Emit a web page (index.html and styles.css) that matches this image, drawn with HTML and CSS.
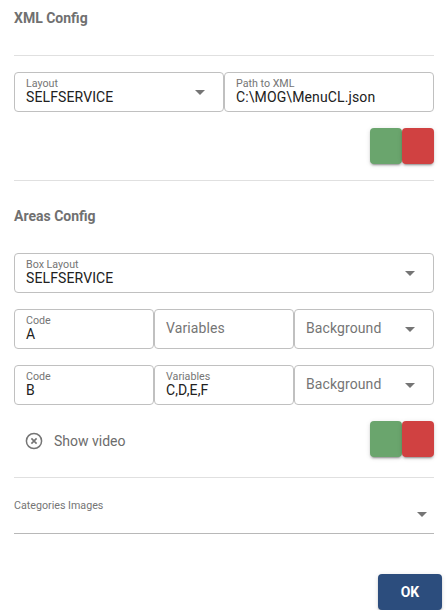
FILE: index.html
```html
<!DOCTYPE html>
<html lang="en">
<head>
<meta charset="utf-8">
<title>XML Config</title>
<link rel="stylesheet" href="styles.css">
</head>
<body>
<main class="dialog">
  <h2 class="title">XML Config</h2>
  <hr class="rule rule-first">
  <div class="row">
    <div class="field"><div class="text"><label>Layout</label><span class="value">SELFSERVICE</span></div><i class="arrow"></i></div>
    <div class="field"><div class="text"><label>Path to XML</label><span class="value">C:\MOG\MenuCL.json</span></div></div>
  </div>
  <div class="actions"><button class="btn green"></button><button class="btn red"></button></div>
  <hr class="rule rule-second">
  <h2 class="title">Areas Config</h2>
  <div class="row row-box">
    <div class="field"><div class="text"><label>Box Layout</label><span class="value">SELFSERVICE</span></div><i class="arrow"></i></div>
  </div>
  <div class="row">
    <div class="field"><div class="text"><label>Code</label><span class="value">A</span></div></div>
    <div class="field"><span class="placeholder">Variables</span></div>
    <div class="field"><span class="placeholder">Background</span><i class="arrow"></i></div>
  </div>
  <div class="row">
    <div class="field"><div class="text"><label>Code</label><span class="value">B</span></div></div>
    <div class="field"><div class="text"><label>Variables</label><span class="value">C,D,E,F</span></div></div>
    <div class="field"><span class="placeholder">Background</span><i class="arrow"></i></div>
  </div>
  <div class="actions">
    <div class="video">
      <svg width="20" height="20" viewBox="0 0 20 20" fill="none" stroke="#757575"><circle cx="10" cy="10" r="7.6" stroke-width="1.5"/><path d="M7.4 7.4l5.2 5.2M12.6 7.4l-5.2 5.2" stroke-width="1.6"/></svg>
      <span>Show video</span>
    </div>
    <button class="btn green"></button><button class="btn red"></button>
  </div>
  <hr class="rule rule-third">
  <div class="categories"><label>Categories Images</label><i class="arrow"></i></div>
  <div class="footer"><button class="ok">OK</button></div>
</main>
</body>
</html>
```
FILE: styles.css
```css
* { box-sizing: border-box; }
body { margin: 0; background: #fff; font-family: Roboto, sans-serif; color: #212121; overflow: hidden; }
.dialog { padding: 8px 13px 0 14px; }
.title { margin: 0; font-size: 14px; line-height: 20px; font-weight: 700; color: #707070; }
.rule { border: 0; height: 1px; background: #e0e0e0; margin: 0; }
.rule-first { margin: 27px 0 16px; }
.rule-second { margin: 16px 0 25px; }
.rule-third { margin: 20px 0 0; }
.row { display: flex; height: 40px; margin-bottom: 16px; }
.row-box { margin-top: 27px; }
.field { flex: 1 1 0; min-width: 0; display: flex; align-items: center; justify-content: space-between; border: 1px solid #c0c0c0; border-radius: 4px; padding: 0 18px 0 11px; }
.text { display: flex; flex-direction: column; padding-bottom: 4px; }
label { font-size: 10.7px; line-height: 13px; color: #757575; }
.value { font-size: 14px; line-height: 14px; letter-spacing: 0.12px; }
.placeholder { font-size: 14px; color: #757575; padding-bottom: 2px; letter-spacing: 0.1px; }
.arrow { border: 5px solid transparent; border-top-color: #757575; border-bottom: 0; }
.actions { display: flex; justify-content: flex-end; height: 36px; align-items: center; }
.btn { width: 32px; height: 36px; border: 0; border-radius: 4px; padding: 0; box-shadow: 0 3px 1px -2px #0003, 0 2px 2px #00000024, 0 1px 5px #0000001f; }
.green { background: #6aa56d; }
.red { background: #d04141; }
.video { display: flex; align-items: center; gap: 10px; margin-right: auto; padding: 3px 0 0 10px; font-size: 14px; color: #6c6c6c; }
.categories { display: flex; align-items: center; justify-content: space-between; height: 56px; border-bottom: 1px solid #b8b8b8; padding-right: 7px; }
.categories .arrow { margin-top: 18px; }
.footer { display: flex; justify-content: flex-end; margin: 40px -8px 0 0; }
.ok { width: 64px; height: 36px; border: 0; border-radius: 4px; background: #2c4d7d; color: #fff; font: 700 14px Roboto, sans-serif; box-shadow: 0 3px 1px -2px #0003, 0 2px 2px #00000024, 0 1px 5px #0000001f; }
```
